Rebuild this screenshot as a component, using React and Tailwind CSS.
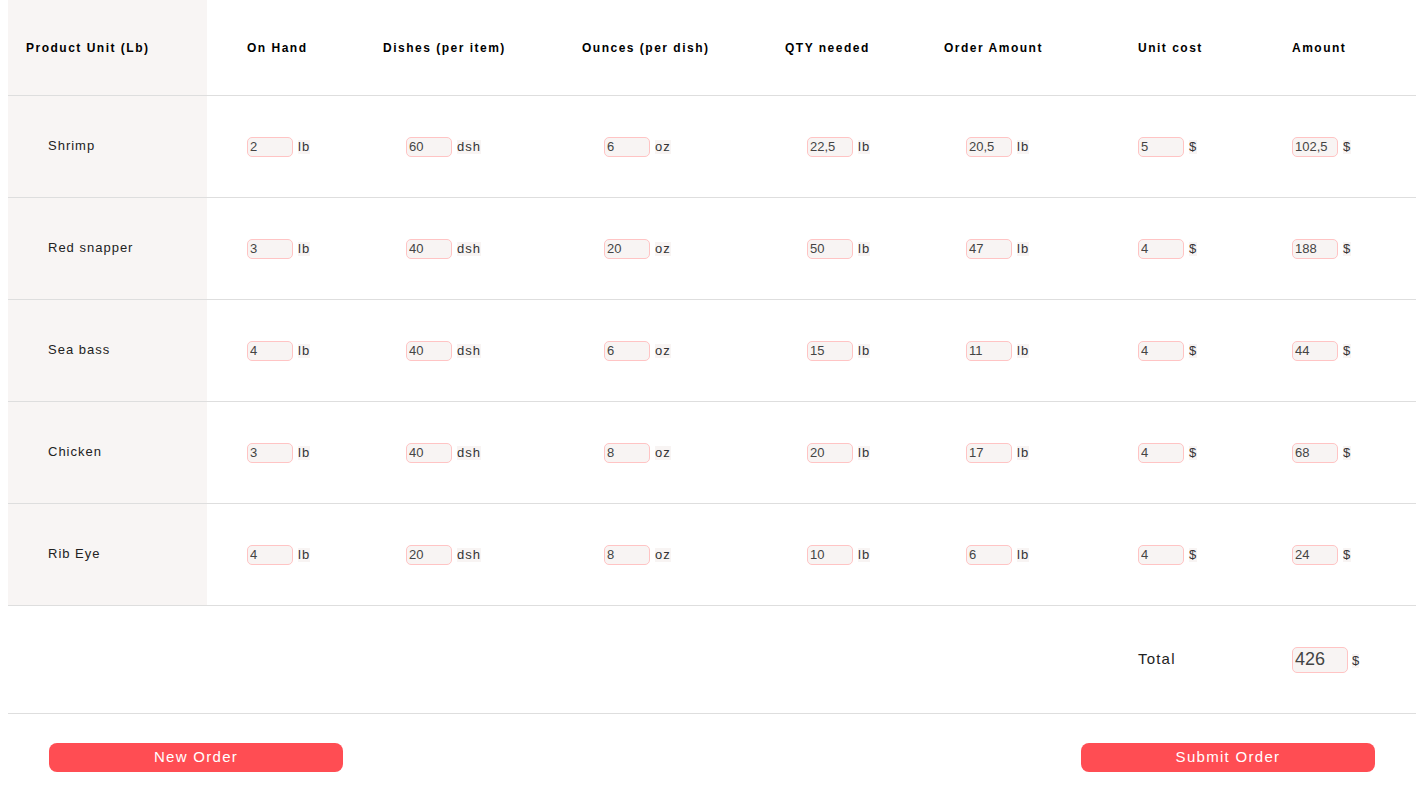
const rows = [
  { name: "Shrimp", v: ["2", "60", "6", "22,5", "20,5", "5", "102,5"] },
  { name: "Red snapper", v: ["3", "40", "20", "50", "47", "4", "188"] },
  { name: "Sea bass", v: ["4", "40", "6", "15", "11", "4", "44"] },
  { name: "Chicken", v: ["3", "40", "8", "20", "17", "4", "68"] },
  { name: "Rib Eye", v: ["4", "20", "8", "10", "6", "4", "24"] },
];

const cols = [
  { head: "On Hand", unit: "lb", w: "w-[156px]", hp: "pl-[40px]", cp: "pl-[40px]" },
  { head: "Dishes (per item)", unit: "dsh", w: "w-[199px]", hp: "pl-[20px]", cp: "pl-[43px]" },
  { head: "Ounces (per dish)", unit: "oz", w: "w-[203px]", hp: "pl-[20px]", cp: "pl-[42px]" },
  { head: "QTY needed", unit: "lb", w: "w-[159px]", hp: "pl-[20px]", cp: "pl-[42px]" },
  { head: "Order Amount", unit: "lb", w: "w-[194px]", hp: "pl-[20px]", cp: "pl-[42px]" },
  { head: "Unit cost", unit: "$", w: "w-[154px]", hp: "pl-[20px]", cp: "pl-[20px]" },
  { head: "Amount", unit: "$", w: "w-[144px]", hp: "pl-[20px]", cp: "pl-[20px]" },
];

const font = { fontFamily: '"Liberation Sans", Arial, Helvetica, sans-serif' };

function Field({ value, unit }) {
  return (
    <div className="flex items-center gap-[5px]">
      <input
        readOnly
        value={value}
        className="w-[46px] h-[20px] rounded-[5px] border border-[#ffc4c4] bg-[#f8f4f3] pl-[2px] text-[13px] text-[#444] outline-none leading-none"
        style={font}
      />
      <span className="bg-[#f8f4f3] text-[13px] tracking-[1px] leading-[14px] text-[#333]">{unit}</span>
    </div>
  );
}

export default function App() {
  return (
    <div className="bg-white w-[1420px] h-[799px] overflow-hidden" style={font}>
      <div className="mx-[8px] w-[1408px]">
        {/* Header */}
        <div className="flex h-[96px] border-b border-[#dedede]">
          <div className="w-[199px] bg-[#f8f5f4] flex items-center pl-[18px] text-[12px] font-bold tracking-[1.5px] text-black">
            Product Unit (Lb)
          </div>
          {cols.map((c) => (
            <div key={c.head} className={`${c.w} ${c.hp} flex items-center text-[12px] font-bold tracking-[1.5px] text-black`}>
              {c.head}
            </div>
          ))}
        </div>
        {/* Rows */}
        {rows.map((r) => (
          <div key={r.name} className="flex h-[102px] border-b border-[#dedede]">
            <div className="w-[199px] bg-[#f8f5f4] flex items-center pl-[40px] pb-[1px] text-[13px] tracking-[1px] text-[#222]">
              {r.name}
            </div>
            {cols.map((c, i) => (
              <div key={c.head} className={`${c.w} ${c.cp} flex items-center`}>
                <Field value={r.v[i]} unit={c.unit} />
              </div>
            ))}
          </div>
        ))}
        {/* Total */}
        <div className="flex h-[108px] border-b border-[#dedede] items-center">
          <div className="w-[1130px]" />
          <div className="w-[154px] text-[15px] tracking-[1.2px] text-[#222]">Total</div>
          <div className="flex items-center gap-[4px]">
            <input
              readOnly
              value="426"
              className="w-[56px] h-[26px] rounded-[5px] border border-[#ffc4c4] bg-[#f8f4f3] pl-[2px] text-[18px] text-[#444] outline-none leading-none"
              style={font}
            />
            <span className="bg-[#f8f4f3] text-[13px] leading-[14px] text-[#333] mt-[2px]">$</span>
          </div>
        </div>
        {/* Buttons */}
        <div className="flex justify-between mt-[29px] px-[41px]">
          <button className="w-[294px] h-[29px] rounded-[8px] bg-[#ff4d53] text-white text-[15px] tracking-[1.3px]" style={font}>
            New Order
          </button>
          <button className="w-[294px] h-[29px] rounded-[8px] bg-[#ff4d53] text-white text-[15px] tracking-[1.3px]" style={font}>
            Submit Order
          </button>
        </div>
      </div>
    </div>
  );
}
